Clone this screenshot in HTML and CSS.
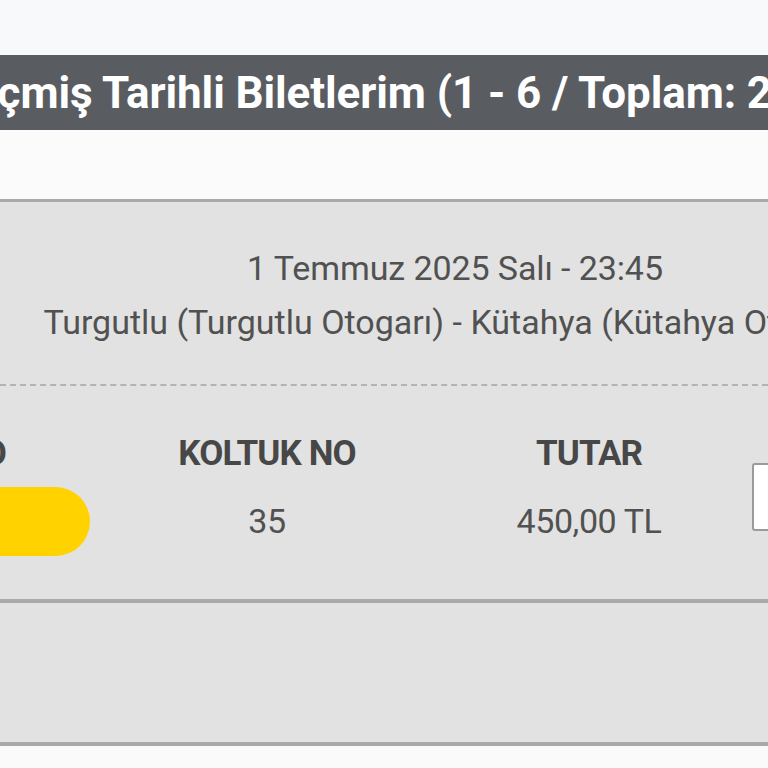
FILE: index.html
```html
<!DOCTYPE html>
<html lang="tr">
<head>
<meta charset="utf-8">
<link rel="stylesheet" href="styles.css">
</head>
<body>
<div class="page">
  <div class="top"></div>
  <div class="title-bar"><span class="title">Geçmiş Tarihli Biletlerim (1 - 6 / Toplam: 24)</span></div>
  <div class="gap"></div>
  <div class="card">
    <div class="info">
      <div class="date">1 Temmuz 2025 Salı - 23:45</div>
      <div class="route">Turgutlu (Turgutlu Otogarı) - Kütahya (Kütahya Otogarı)</div>
    </div>
    <div class="dash"></div>
    <div class="cols">
      <div class="col">
        <div class="label">PNR NO</div>
        <div class="pill"></div>
      </div>
      <div class="col">
        <div class="label">KOLTUK NO</div>
        <div class="value">35</div>
      </div>
      <div class="col">
        <div class="label">TUTAR</div>
        <div class="value">450,00 TL</div>
      </div>
      <div class="col col-btn">
        <div class="btn"></div>
      </div>
    </div>
  </div>
  <div class="card card-empty"></div>
  <div class="bottom"></div>
</div>
</body>
</html>
```

FILE: styles.css
```css
html, body {
  margin: 0;
  padding: 0;
  width: 768px;
  height: 768px;
  overflow: hidden;
  background: #f9f9fa;
  font-family: Roboto, "Liberation Sans", Arial, sans-serif;
}
.page {
  width: 768px;
  overflow: hidden;
}
.top {
  height: 55px;
  background: #f8f9fa;
}
.title-bar {
  height: 75px;
  background: #595d62;
  display: flex;
  align-items: center;
  white-space: nowrap;
  overflow: hidden;
}
.title {
  color: #ffffff;
  font-weight: 700;
  font-size: 44px;
  margin-left: -56px;
  letter-spacing: -0.1px;
}
.gap {
  height: 69px;
  background: #fbfbfc;
}
.card {
  background: #e2e2e2;
  border-top: 3px solid #a9a9a9;
  height: 397px;
}
.info {
  width: 910px;
  text-align: center;
  padding-top: 48px;
  white-space: nowrap;
  color: #515151;
}
.date {
  font-size: 34px;
  line-height: 36px;
  letter-spacing: -0.1px;
}
.route {
  font-size: 34px;
  line-height: 36px;
  margin-top: 18px;
  letter-spacing: 0;
}
.dash {
  margin-top: 44px;
  border-top: 2px dashed #b3b3b3;
}
.cols {
  display: grid;
  grid-template-columns: 322px 322px 322px 322px;
  margin-left: -216px;
  padding-top: 50px;
}
.col {
  display: flex;
  flex-direction: column;
  align-items: center;
  white-space: nowrap;
}
.label {
  font-size: 35px;
  font-weight: 700;
  color: #474747;
  line-height: 36px;
  letter-spacing: -0.9px;
}
.value {
  font-size: 34px;
  color: #515151;
  line-height: 36px;
  margin-top: 31px;
  letter-spacing: -0.4px;
}
.pill {
  width: 290px;
  height: 69px;
  border-radius: 35px;
  background: #ffd200;
  margin-top: 15px;
}
.col-btn {
  align-items: flex-start;
  padding-top: 27px;
}
.btn {
  margin-left: 2px;
  width: 120px;
  height: 64px;
  background: #ffffff;
  border: 2px solid #9a9a9a;
  border-radius: 3px;
}
.card-empty {
  height: 139px;
  border-top: 4px solid #a9a9a9;
  border-bottom: 4px solid #a9a9a9;
}
.bottom {
  height: 30px;
  background: #fafafa;
}
```
